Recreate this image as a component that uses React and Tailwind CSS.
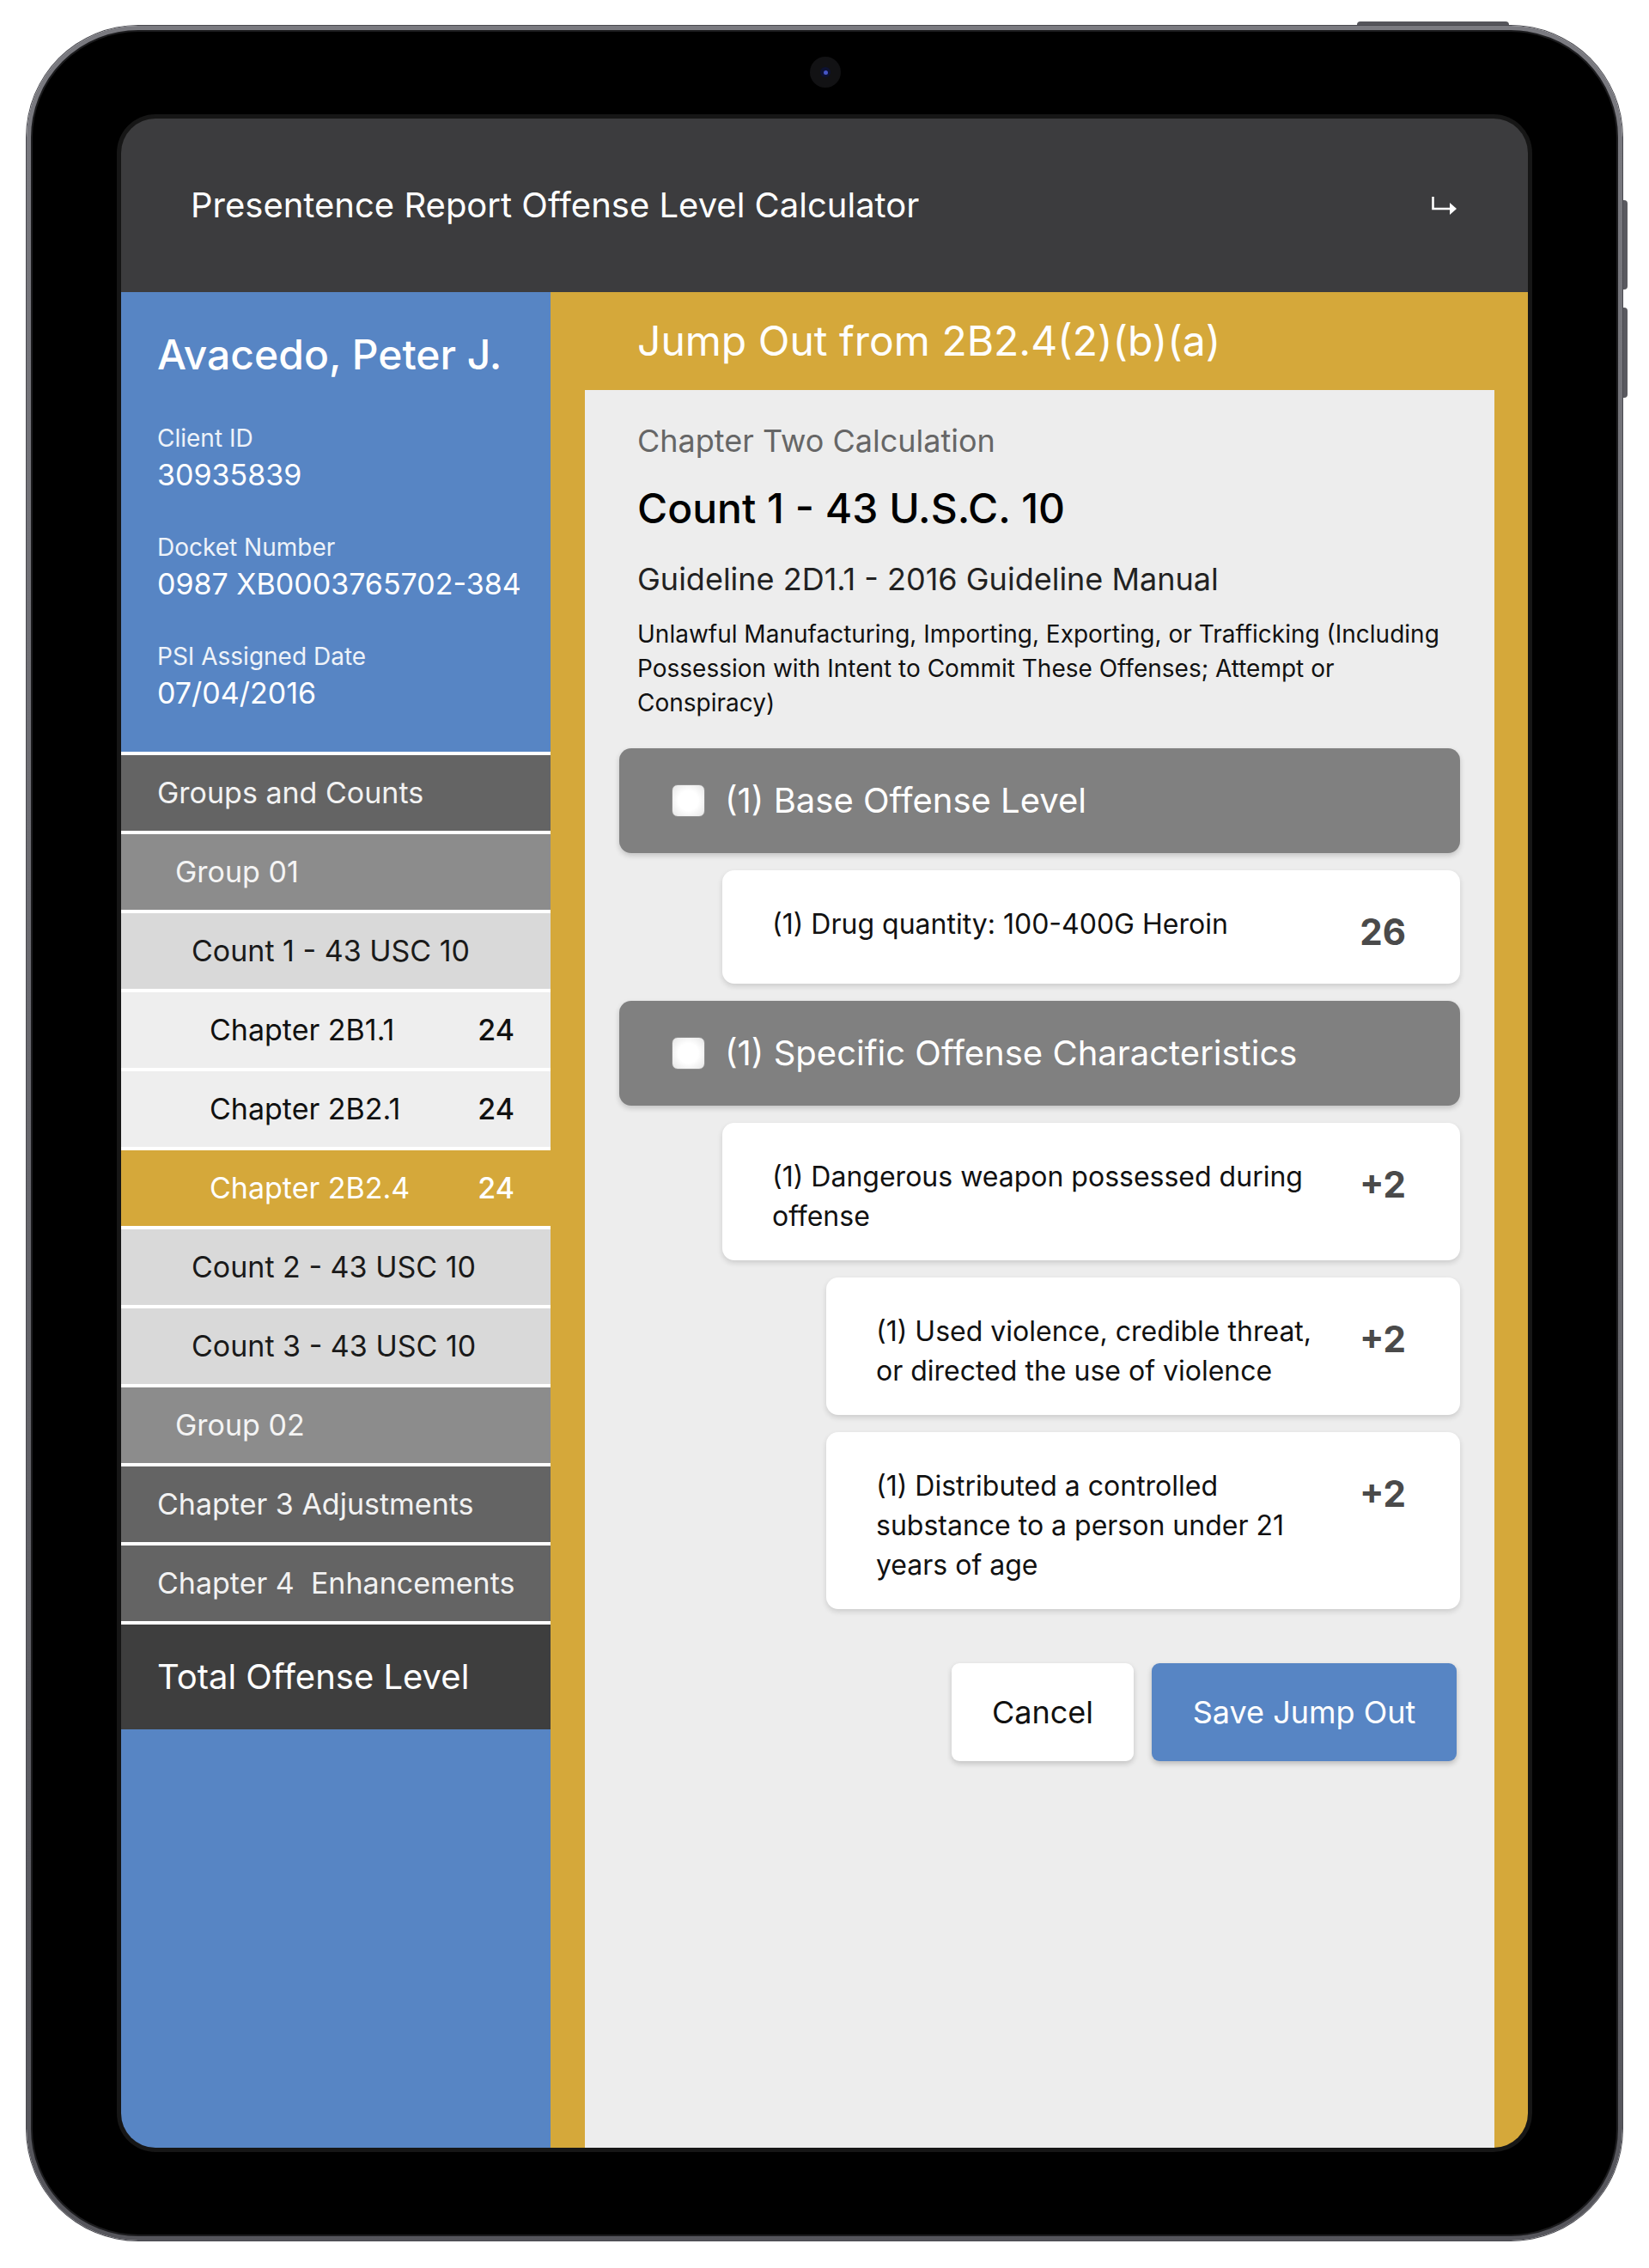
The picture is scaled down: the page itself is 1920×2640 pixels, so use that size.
import React from 'react'

const rows = [
    { label: 'Groups and Counts', indent: 'pl-[42px]', tone: 'bg-[#646464] text-[#f2f2f2]' },
    { label: 'Group 01', indent: 'pl-[63px]', tone: 'bg-[#8c8c8c] text-[#f4f4f4]' },
    { label: 'Count 1 - 43 USC 10', indent: 'pl-[82px]', tone: 'bg-[#d9d9d9] text-[#1a1a1a]' },
    { label: 'Chapter 2B1.1', indent: 'pl-[103px]', tone: 'bg-[#eeeeee] text-[#111111]', score: '24' },
    { label: 'Chapter 2B2.1', indent: 'pl-[103px]', tone: 'bg-[#eeeeee] text-[#111111]', score: '24' },
    { label: 'Chapter 2B2.4', indent: 'pl-[103px]', tone: 'bg-[#d5a83a] text-white', score: '24' },
    { label: 'Count 2 - 43 USC 10', indent: 'pl-[82px]', tone: 'bg-[#d9d9d9] text-[#1a1a1a]' },
    { label: 'Count 3 - 43 USC 10', indent: 'pl-[82px]', tone: 'bg-[#d9d9d9] text-[#1a1a1a]' },
    { label: 'Group 02', indent: 'pl-[63px]', tone: 'bg-[#8c8c8c] text-[#f4f4f4]' },
    { label: 'Chapter 3 Adjustments', indent: 'pl-[42px]', tone: 'bg-[#646464] text-[#f2f2f2]' },
    { label: 'Chapter 4  Enhancements', indent: 'pl-[42px]', tone: 'bg-[#646464] text-[#f2f2f2]' },
]

const clientInfo = [
    { label: 'Client ID', value: '30935839' },
    { label: 'Docket Number', value: '0987 XB0003765702-384' },
    { label: 'PSI Assigned Date', value: '07/04/2016' },
]

const SectionHeader = ({ title }) => (
    <div className="h-[122px] rounded-[14px] bg-[#808080] shadow-[0_3px_6px_rgba(0,0,0,0.18)] flex items-center pl-[61px] gap-[23px]">
        <span className="w-[39px] h-[38px] rounded-[7px] border border-[#8f8f8f] bg-[radial-gradient(circle,#ffffff_45%,#e4e4e4_100%)]" />
        <span className="text-[40px] leading-[48px] text-white">{title}</span>
    </div>
)

const ItemCard = ({ text, score, inset }) => (
    <div className={`${inset} bg-white rounded-[14px] shadow-[0_3px_6px_rgba(0,0,0,0.14)] flex items-start pt-[40px] pb-[28px] pl-[58px] pr-[63px]`}>
        <p className="flex-1 text-[32px] leading-[46px] text-[#111111] pr-[30px] max-w-[650px]">{text}</p>
        <span className="ml-auto text-[42px] leading-[64px] font-bold text-[#4a4a4a]">{score}</span>
    </div>
)

const ExitIcon = () => (
    <svg width="29" height="21" viewBox="0 0 29 21" fill="none">
        <path d="M1.5 0 V14 H22" stroke="white" strokeWidth="2.6" />
        <polygon points="21,7 29,14 21,21" fill="white" />
    </svg>
)

export default function App() {
    return (
        <div className="w-[1920px] h-[2640px] bg-white pt-[30px] pl-[31px] font-[Inter,'Noto_Sans',sans-serif]">
            <div className="relative w-[1858px] h-[2578px]">
                {/* hardware buttons */}
                <div className="absolute left-[1549px] top-[-5px] w-[177px] h-[12px] rounded-t-[4px] bg-[#55555b]" />
                <div className="absolute left-[1850px] top-[203px] w-[14px] h-[104px] rounded-r-[4px] bg-[#5a5a60]" />
                <div className="absolute left-[1850px] top-[328px] w-[14px] h-[105px] rounded-r-[4px] bg-[#5a5a60]" />

                <div className="relative w-full h-full rounded-[130px] bg-gradient-to-b from-[#7a7a80] to-[#55555b] p-[5px] shadow-[0_0_0_1px_#4a4a50]">
                    <div className="relative w-full h-full rounded-[125px] bg-black border-[2px] border-[#1c1c1e] pt-[96px] pl-[98px]">
                        {/* camera */}
                        <div className="absolute left-[905px] top-[29px] w-[36px] h-[36px] rounded-full bg-[#121214] flex items-center justify-center">
                            <div className="w-[12px] h-[12px] rounded-full bg-[#0d1233] flex items-center justify-center">
                                <div className="w-[5px] h-[5px] rounded-full bg-[#4656c8]" />
                            </div>
                        </div>

                        <div className="w-[1648px] h-[2372px] rounded-[45px] bg-[#161616] p-[5px]">
                            <div className="w-[1638px] h-[2362px] rounded-[40px] overflow-hidden flex flex-col">
                                <header className="h-[202px] shrink-0 bg-[#3c3c3e] flex items-center justify-between pl-[81px] pr-[83px]">
                                    <h1 className="text-[40px] leading-[48px] text-white">Presentence Report Offense Level Calculator</h1>
                                    <ExitIcon />
                                </header>

                                <div className="flex flex-1">
                                    <aside className="w-[500px] shrink-0 bg-[#5785c4] flex flex-col">
                                        <div className="pl-[42px] pt-[45px] pb-[48px] text-white">
                                            <h2 className="text-[48px] leading-[56px] font-medium">Avacedo, Peter J.</h2>
                                            <div className="mt-[52px] flex flex-col gap-[47px]">
                                                {clientInfo.map((item, index) => (
                                                    <div key={index}>
                                                        <div className="text-[28px] leading-[34px] text-white/90">{item.label}</div>
                                                        <div className="mt-[6px] text-[34px] leading-[40px]">{item.value}</div>
                                                    </div>
                                                ))}
                                            </div>
                                        </div>

                                        {rows.map((row, index) => (
                                            <div key={index} className={`h-[92px] border-t-[4px] border-white flex items-center justify-between pr-[42px] ${row.indent} ${row.tone}`}>
                                                <span className="text-[34px] leading-[40px] whitespace-pre">{row.label}</span>
                                                {row.score && <span className="text-[34px] leading-[40px] font-medium">{row.score}</span>}
                                            </div>
                                        ))}
                                        <div className="h-[126px] border-t-[4px] border-white bg-[#3e3e3e] flex items-center pl-[42px]">
                                            <span className="text-[40px] leading-[48px] text-white">Total Offense Level</span>
                                        </div>
                                    </aside>

                                    <main className="flex-1 bg-[#d5a83a] flex flex-col pl-[40px] pr-[39px]">
                                        <div className="h-[114px] shrink-0 flex items-center pl-[61px]">
                                            <h2 className="text-[48px] leading-[56px] text-white">Jump Out from 2B2.4(2)(b)(a)</h2>
                                        </div>

                                        <div className="flex-1 bg-[#ededed] px-[40px] pt-[37px]">
                                            <div className="pl-[21px]">
                                                <div className="text-[36px] leading-[44px] text-[#666666]">Chapter Two Calculation</div>
                                                <div className="mt-[29px] text-[48px] leading-[56px] font-medium text-black">Count 1 - 43 U.S.C. 10</div>
                                                <div className="mt-[32px] text-[36px] leading-[44px] text-[#222222]">Guideline 2D1.1 - 2016 Guideline Manual</div>
                                                <p className="mt-[22px] text-[28px] leading-[40px] text-[#111111]">
                                                    Unlawful Manufacturing, Importing, Exporting, or Trafficking (Including Possession with Intent to Commit These Offenses; Attempt or Conspiracy)
                                                </p>
                                            </div>

                                            <div className="mt-[33px] flex flex-col gap-[20px]">
                                                <SectionHeader title="(1) Base Offense Level" />
                                                <ItemCard inset="ml-[120px]" text="(1) Drug quantity: 100-400G Heroin" score="26" />
                                                <SectionHeader title="(1) Specific Offense Characteristics" />
                                                <ItemCard inset="ml-[120px]" text="(1) Dangerous weapon possessed during offense" score="+2" />
                                                <ItemCard inset="ml-[241px]" text="(1) Used violence, credible threat, or directed the use of violence" score="+2" />
                                                <ItemCard inset="ml-[241px]" text="(1) Distributed a controlled substance to a person under 21 years of age" score="+2" />
                                            </div>

                                            <div className="mt-[63px] flex justify-end gap-[21px] pr-[4px]">
                                                <button className="w-[212px] h-[114px] rounded-[9px] bg-white shadow-[0_3px_6px_rgba(0,0,0,0.18)] text-[36px] text-[#111111]">Cancel</button>
                                                <button className="w-[355px] h-[114px] rounded-[9px] bg-[#5785c4] shadow-[0_3px_6px_rgba(0,0,0,0.22)] text-[36px] text-white">Save Jump Out</button>
                                            </div>
                                        </div>
                                    </main>
                                </div>
                            </div>
                        </div>
                    </div>
                </div>
            </div>
        </div>
    )
}
